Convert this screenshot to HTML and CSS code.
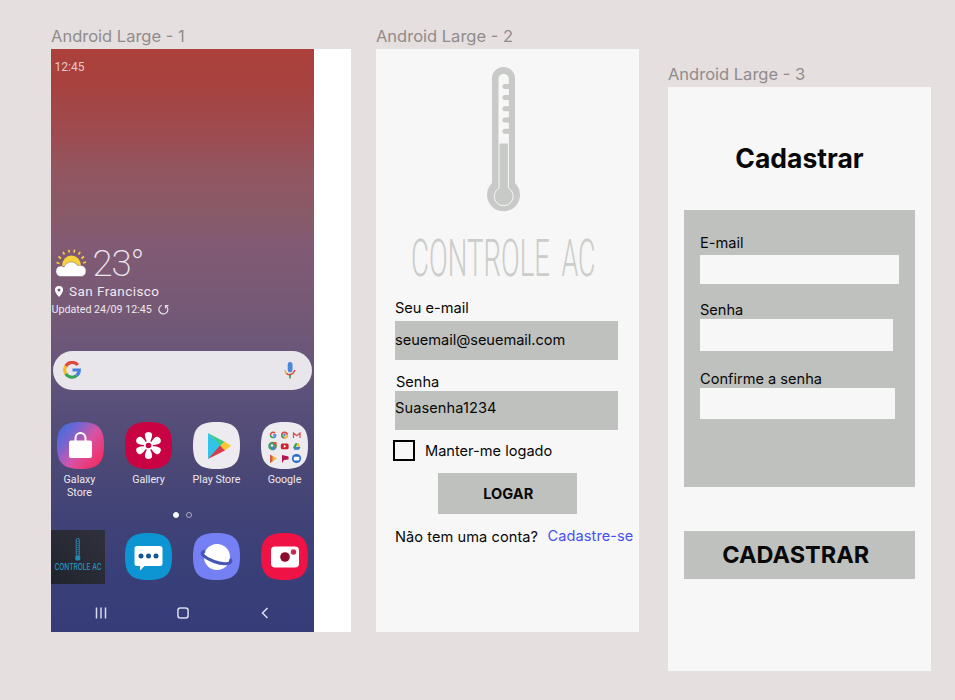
FILE: index.html
```html
<!DOCTYPE html>
<html lang="pt-BR">
<head>
<meta charset="utf-8">
<title>Controle AC</title>
<link rel="stylesheet" href="styles.css">
</head>
<body>
<main class="board">
  <section class="artboard artboard-home">
    <h2 class="artboard-name">Android Large - 1</h2>
    <div class="frame frame-home">
      <div class="screen">
        <div class="clock">12:45</div>
        <div class="weather">
          <svg class="weather-icon" viewBox="0 0 32 28">
            <g stroke="#f4d03c" stroke-width="1.700"><path d="M4.500 14.500l-3-1M6 9.500L3.500 7.500M9.500 5.500L8 3M14 3.500V.8M19 3.500l.6-2.700M23.500 5.500l1.700-2.500M26.500 9.500l2.500-2M28 14l3-1"/></g>
            <path d="M7 17a9.500 10.500 0 0 1 19 0z" fill="#f6d33b"/>
            <path d="M5.500 27.500a5.300 5.300 0 0 1 0-10.500c1.500 0 2.500.3 3.500 1a7.500 7.500 0 0 1 13.500-1.500c5-1 8.500 1.500 8.500 5.500 0 3.500-2 5.500-5.500 5.500z" fill="#fff" stroke="#765875" stroke-width=".5"/>
          </svg>
          <span class="degrees">23°</span>
        </div>
        <div class="city">
          <svg width="8" height="11" viewBox="0 0 8 11"><path d="M4 0a4 4 0 0 1 4 4c0 3-4 7-4 7S0 7 0 4a4 4 0 0 1 4-4z" fill="#fff"/><circle cx="4" cy="4" r="1.500" fill="#755b7b"/></svg>
          <span>San Francisco</span>
        </div>
        <div class="updated">
          <span>Updated 24/09 12:45</span>
          <svg width="11" height="11" viewBox="0 0 11 11" fill="none" stroke="#e8e1e8" stroke-width="1.200"><path d="M3.800 1.200a4.500 4.500 0 1 0 4.500.8M7.500 4.500V1.500h3"/></svg>
        </div>
        <div class="search">
          <svg width="18" height="18" viewBox="0 0 18 18" fill="none" stroke-width="3.200"><path d="M14.800 4A7.300 7.300 0 0 0 2.800 5.200" stroke="#de4b3e"/><path d="M2.800 5.200a7.300 7.300 0 0 0 0 7.600" stroke="#f6bb22"/><path d="M2.800 12.800a7.300 7.300 0 0 0 10.800 1.800" stroke="#36a452"/><path d="M13.600 14.600a7.300 7.300 0 0 0 2.700-5.600H9.500" stroke="#4381e0"/></svg>
          <svg width="12" height="17" viewBox="0 0 12 17" fill="none"><rect x="3.700" y="0" width="4.800" height="10.500" rx="2.400" fill="#4c87de"/><path d="M1 8a5 5 0 0 0 2 4" stroke="#e9b53c" stroke-width="1.500"/><path d="M2.500 11.500c2 2 6 2 8.500-3.500" stroke="#d4483e" stroke-width="1.500"/><path d="M6 13v3.500" stroke="#3f9c54" stroke-width="1.700"/></svg>
        </div>
        <div class="apps">
          <div class="app">
            <svg viewBox="0 0 47 47"><defs><linearGradient id="galaxy" x1="0" y1="0" x2="1" y2=".8"><stop offset="0" stop-color="#2f6fdc"/><stop offset=".3" stop-color="#7266d2"/><stop offset=".6" stop-color="#d653a5"/><stop offset="1" stop-color="#f42c60"/></linearGradient></defs><path d="M23.500 0C41 0 47 6 47 23.500S41 47 23.500 47 0 41 0 23.500 6 0 23.500 0z" fill="url(#galaxy)"/><rect x="12" y="18.500" width="23" height="17.500" rx="2" fill="#fff"/><path d="M18.500 20v-4a5 5 0 0 1 10 0v4" fill="none" stroke="#fff" stroke-width="2"/></svg>
            <span class="app-name-wrapped">Galaxy<br>Store</span>
          </div>
          <div class="app">
            <svg viewBox="0 0 47 47"><path d="M23.500 0C41 0 47 6 47 23.500S41 47 23.500 47 0 41 0 23.500 6 0 23.500 0z" fill="#c90343"/><g fill="#fff"><path id="petal" d="M22.600 21c-2-4-3-6.500-2.600-8.800.7-3 6.300-3 7 0 .4 2.300-.6 4.800-2.600 8.800z"/><use href="#petal" transform="rotate(60 23.500 23.500)"/><use href="#petal" transform="rotate(120 23.500 23.500)"/><use href="#petal" transform="rotate(180 23.500 23.500)"/><use href="#petal" transform="rotate(240 23.500 23.500)"/><use href="#petal" transform="rotate(300 23.500 23.500)"/><circle cx="23.500" cy="23.500" r="4.500"/></g><circle cx="23.500" cy="23.500" r="2.800" fill="#c90343"/></svg>
            <span>Gallery</span>
          </div>
          <div class="app">
            <svg viewBox="0 0 47 47"><path d="M23.500 0C41 0 47 6 47 23.500S41 47 23.500 47 0 41 0 23.500 6 0 23.500 0z" fill="#edeaf0"/><path d="M15 11l13.500 13L15 37z" fill="#2fc4e8"/><path d="M15 11l17 9-4 4.500z" fill="#43c98a"/><path d="M31.500 19.500l6.500 4.500-6.500 4.500-4.500-4.500z" fill="#fbc62f"/><path d="M15 37l17-8.500-5-5z" fill="#d63c4e"/></svg>
            <span>Play Store</span>
          </div>
          <div class="app">
            <svg viewBox="0 0 47 47"><path d="M23.500 0C41 0 47 6 47 23.500S41 47 23.500 47 0 41 0 23.500 6 0 23.500 0z" fill="#edeaf0"/>
              <g fill="none" stroke-width="1.500"><path d="M14 11.200a2.600 2.600 0 0 0-4.500 1.800" stroke="#de4b3e"/><path d="M9.500 13a2.600 2.600 0 0 0 2.500 2.600" stroke="#36a452"/><path d="M12 15.600a2.600 2.600 0 0 0 2.600-2.600H12" stroke="#4381e0"/></g>
              <circle cx="23.500" cy="13" r="3.500" fill="#d84a3b"/><path d="M23.500 13l-3.300-1a3.500 3.500 0 0 0 3 4.500z" fill="#3b9e52"/><path d="M23.500 13l3.500-.5a3.500 3.500 0 0 1-3.800 4z" fill="#f1c232"/><circle cx="23.500" cy="13" r="1.600" fill="#4b82d8" stroke="#fff" stroke-width=".6"/>
              <path d="M32.500 16v-5l3.300 2.700L39 11v5" fill="none" stroke="#d64d47" stroke-width="1.200"/>
              <circle cx="11.500" cy="24" r="4.300" fill="#4a9d61"/><path d="M8 21.500l7 5-3 2z" fill="#4983cf"/><path d="M12 20h3.500v5z" fill="#d84d44"/><circle cx="11" cy="23.500" r="1.200" fill="#edeaf0"/>
              <rect x="19.800" y="21.500" width="7.800" height="5.700" rx="1.500" fill="#cc232b"/><path d="M22.800 22.800v3l2.500-1.500z" fill="#fff"/>
              <path d="M34.500 21h2.500l-3.500 6.500-1.500-2z" fill="#37a15a"/><path d="M35.500 21h2l2 4.500H37z" fill="#f3c036"/><path d="M34 25h5.500l-1.500 2.700h-5z" fill="#427ccf"/>
              <path d="M9.500 32.500l6.500 4-6.500 4z" fill="#edb53b"/><path d="M9 32.500l2.500 2v5L9 41z" fill="#d45b4a"/>
              <path d="M21 33l6.500 1.500v3L23 38l-2 3z" fill="#b3174e"/>
              <circle cx="35.500" cy="36.500" r="4.600" fill="#286dcc"/><rect x="32.800" y="34.800" width="5.500" height="3.700" rx="1" fill="#fff"/></svg>
            <span>Google</span>
          </div>
        </div>
        <div class="pages"><i class="page page-current"></i><i class="page"></i></div>
        <div class="dock">
          <svg class="dock-ac" viewBox="0 0 54 54"><defs><linearGradient id="tile" x1="0" y1="1" x2="1" y2="0"><stop offset="0" stop-color="#20232d"/><stop offset="1" stop-color="#31313c"/></linearGradient></defs><rect width="54" height="54" fill="url(#tile)"/><path d="M25.300 26.500V10a1.500 1.500 0 0 1 3 0v16.500" fill="none" stroke="#287b9c" stroke-width="1.200"/><path d="M27 11v15" stroke="#248ab4" stroke-dasharray="1 1"/><circle cx="26.800" cy="28" r="2.600" fill="#228bb8"/><text class="tile-name" x="3.500" y="40" textLength="47" lengthAdjust="spacingAndGlyphs">CONTROLE AC</text></svg>
          <svg class="dock-icon" viewBox="0 0 47 47"><path d="M23.500 0C41 0 47 6 47 23.500S41 47 23.500 47 0 41 0 23.500 6 0 23.500 0z" fill="#0c95d2"/><path d="M12 13h23q2.500 0 2.500 2.500v15Q37.500 33 35 33H19.500L15 37.500V33h-3q-2.500 0-2.500-2.500v-15Q9.500 13 12 13z" fill="#fff"/><g fill="#155694"><circle cx="16" cy="23" r="2.500"/><circle cx="23.500" cy="23" r="2.500"/><circle cx="31" cy="23" r="2.500"/></g></svg>
          <svg class="dock-icon" viewBox="0 0 47 47"><path d="M23.500 0C41 0 47 6 47 23.500S41 47 23.500 47 0 41 0 23.500 6 0 23.500 0z" fill="#7580f5"/><circle cx="24" cy="24" r="13" fill="#fff"/><path d="M12 18c-7 2 0 7 9 10.500S41 31.500 37 26" fill="none" stroke="#4656b4" stroke-width="3"/></svg>
          <svg class="dock-icon" viewBox="0 0 47 47"><path d="M23.500 0C41 0 47 6 47 23.500S41 47 23.500 47 0 41 0 23.500 6 0 23.500 0z" fill="#ee1245"/><rect x="10" y="13.500" width="28" height="21" rx="4" fill="#fff"/><circle cx="24" cy="24" r="4.800" fill="#8c0c2b"/><circle cx="32.500" cy="19" r="2.700" fill="#cc284f"/></svg>
        </div>
        <div class="nav">
          <svg width="12" height="12" viewBox="0 0 12 12" stroke="#d7dcea" stroke-width="1.500"><path d="M1.500.5v11M6 .5v11M10.500.5v11"/></svg>
          <svg width="12" height="12" viewBox="0 0 12 12" fill="none" stroke="#d7dcea" stroke-width="1.500"><rect x=".9" y="1" width="10.200" height="10" rx="2.500"/></svg>
          <svg width="12" height="12" viewBox="0 0 12 12" fill="none" stroke="#d7dcea" stroke-width="1.600"><path d="M8.500 1L3.500 6l5 5"/></svg>
        </div>
      </div>
    </div>
  </section>

  <section class="artboard artboard-login">
    <h2 class="artboard-name">Android Large - 2</h2>
    <form class="frame frame-login">
      <svg class="brand" viewBox="400 55 210 235">
        <path d="M492 183V78.500a11.500 11.500 0 0 1 23 0V183a16.500 16.500 0 1 1-23 0z" fill="#c8cac7"/>
        <path d="M498.500 143.500V79a5.200 5.200 0 0 1 10.400 0v5h-4a2.500 2.500 0 0 0 0 5h4v6h-4a2.500 2.500 0 0 0 0 5h4v6.300h-4a2.500 2.500 0 0 0 0 5h4v6.200h-4a2.500 2.500 0 0 0 0 5h4v6.300h-4a2.500 2.500 0 0 0 0 5h4v9.700z" fill="#f7f7f7"/>
        <path d="M499 143v45a9.500 9.500 0 1 0 9.400 0v-45" fill="none" stroke="#f7f7f7"/>
        <text class="brand-name" x="411" y="276" textLength="139" lengthAdjust="spacingAndGlyphs">CONTROLE</text>
        <text class="brand-name" x="561.500" y="276" textLength="34" lengthAdjust="spacingAndGlyphs">AC</text>
      </svg>
      <label class="label-email">Seu e-mail</label>
      <div class="field">seuemail@seuemail.com</div>
      <label class="label-password">Senha</label>
      <div class="field field-password">Suasenha1234</div>
      <div class="remember"><span class="checkbox"></span><span>Manter-me logado</span></div>
      <div class="login-button">LOGAR</div>
      <p class="signup"><span>Não tem uma conta?</span><a class="signup-link">Cadastre-se</a></p>
    </form>
  </section>

  <section class="artboard artboard-register">
    <h2 class="artboard-name">Android Large - 3</h2>
    <form class="frame frame-register">
      <h1 class="title">Cadastrar</h1>
      <div class="panel">
        <label>E-mail</label>
        <div class="input input-email"></div>
        <label>Senha</label>
        <div class="input input-password"></div>
        <label>Confirme a senha</label>
        <div class="input input-confirm"></div>
      </div>
      <div class="register-button">CADASTRAR</div>
    </form>
  </section>
</main>
</body>
</html>
```
FILE: styles.css
```css
* { box-sizing: border-box; }
body { margin: 0; background: #e5dfdf; font-family: Inter, sans-serif; font-size: 14.6px; color: #080808; }
h1, h2, p { margin: 0; }
svg { display: block; flex: none; }
label { display: block; }
.board { display: flex; align-items: flex-start; width: 955px; height: 700px; padding-left: 51px; overflow: hidden; }
.artboard { flex: none; padding-top: 24px; }
.artboard-name { height: 24.500px; line-height: 25px; font-size: 16.500px; font-weight: 400; color: #918c8c; white-space: nowrap; }
.artboard-home { width: 300.400px; }
.artboard-login { width: 263px; margin-left: 24.600px; }
.artboard-register { width: 263px; margin-left: 29px; padding-top: 62px; }
.frame { height: 583.500px; background: #f7f7f7; }
.frame-home { background: #fff; }

.screen { width: 263px; height: 100%; overflow: hidden; color: #eee8ee; font-family: Roboto, sans-serif; background: linear-gradient(#ac403b 0%, #a7423f 6%, #9d4c52 15%, #925661 21%, #895a68 28%, #815a74 34%, #765975 44%, #69567a 53%, #59507a 61%, #4d4976 70%, #424377 79%, #394078 89%, #353c78 100%); }
.clock { height: 36px; padding-left: 3.500px; line-height: 36px; font-size: 12px; color: #ecc7c6; }
.weather { display: flex; align-items: center; gap: 5.500px; height: 37px; margin-top: 160px; padding-left: 4px; }
.weather-icon { width: 32px; height: 28px; overflow: visible; }
.degrees { font-size: 36.500px; font-weight: 200; line-height: 37px; letter-spacing: -1.100px; }
.city { display: flex; align-items: center; gap: 6px; height: 19px; padding-left: 4px; font-size: 13.500px; letter-spacing: .45px; }
.updated { display: flex; align-items: center; gap: 6px; height: 17px; padding-left: .5px; font-size: 10.700px; white-space: nowrap; }
.search { display: flex; align-items: center; justify-content: space-between; width: 259px; height: 39.500px; margin: 33px 0 0 2px; padding: 0 16px 0 10px; border-radius: 20px; background: #e8e6eb; }
.apps, .dock { display: grid; grid-template-columns: repeat(4, 68px); width: 272px; margin-left: -4.500px; justify-items: center; }
.apps { height: 85px; margin-top: 31.500px; }
.app { display: flex; flex-direction: column; align-items: center; gap: 5.500px; text-align: center; font-size: 10.700px; line-height: 12.500px; white-space: nowrap; }
.app-name-wrapped { padding-right: 2px; }
.app svg, .dock-icon { width: 47px; height: 47px; }
.pages { display: flex; align-items: center; gap: 7px; height: 16px; padding-left: 122px; }
.page { width: 6px; height: 6px; border: 1px solid #aaaac5; border-radius: 50%; }
.page-current { background: #fff; border-color: #fff; }
.dock { height: 54px; margin-top: 7px; align-items: center; }
.dock-ac { width: 54px; height: 54px; justify-self: start; margin-left: 4.500px; overflow: visible; }
.tile-name { font: 500 8.500px Inter, sans-serif; fill: #2898c6; }
.nav { display: grid; grid-template-columns: repeat(3, 82px); justify-items: center; align-items: center; height: 22px; margin: 18.500px 0 0 8.500px; }

.frame-login { padding-top: 6.500px; }
.brand { width: 210px; height: 235px; margin-left: 24px; overflow: visible; }
.brand-name { font: 300 52px Roboto, sans-serif; fill: #cbcdca; }
.label-email, .label-password { margin-left: 19px; height: 24px; line-height: 23px; }
.label-email { margin-top: 6.500px; }
.label-password { margin: 10px 0 0 20px; height: 21px; line-height: 24px; }
.field { width: 223.500px; height: 39px; margin-left: 19px; line-height: 38.500px; letter-spacing: -.03px; background: #bfc1be; }
.field-password { line-height: 35px; letter-spacing: .08px; }
.remember { display: flex; align-items: center; gap: 10px; height: 22px; margin: 10px 0 0 17px; }
.checkbox { width: 22px; height: 21px; border: 2px solid #000; }
.login-button { width: 139.500px; height: 41px; margin: 11.500px 0 0 62px; line-height: 42px; padding-left: 1px; text-align: center; font-weight: 700; background: #bfc1be; }
.signup { display: flex; gap: 9.500px; height: 24px; margin: 10.500px 0 0 19px; line-height: 24px; letter-spacing: .06px; white-space: nowrap; }
.signup-link { color: #4a50f0; line-height: 22.500px; }

.frame-register { height: 584px; padding-top: 50px; }
.title { height: 44px; line-height: 43px; font-size: 26.500px; text-align: center; }
.panel { width: 231px; height: 277.500px; margin: 29px 0 0 15.700px; padding: 23px 0 0 16.300px; background: #bfc1be; }
.panel label { height: 19px; line-height: 20px; }
.panel label:first-child { height: 22px; line-height: 21px; }
.input { background: #f7f7f7; }
.input-email { width: 199.500px; height: 29.500px; margin-bottom: 16px; }
.input-password { width: 193.500px; height: 32px; margin-bottom: 18px; }
.input-confirm { width: 195px; height: 31px; }
.register-button { width: 231px; height: 48.500px; margin: 43.500px 0 0 15.700px; padding-right: 7px; line-height: 48px; text-align: center; font-size: 23.500px; font-weight: 700; background: #bfc1be; }
```
